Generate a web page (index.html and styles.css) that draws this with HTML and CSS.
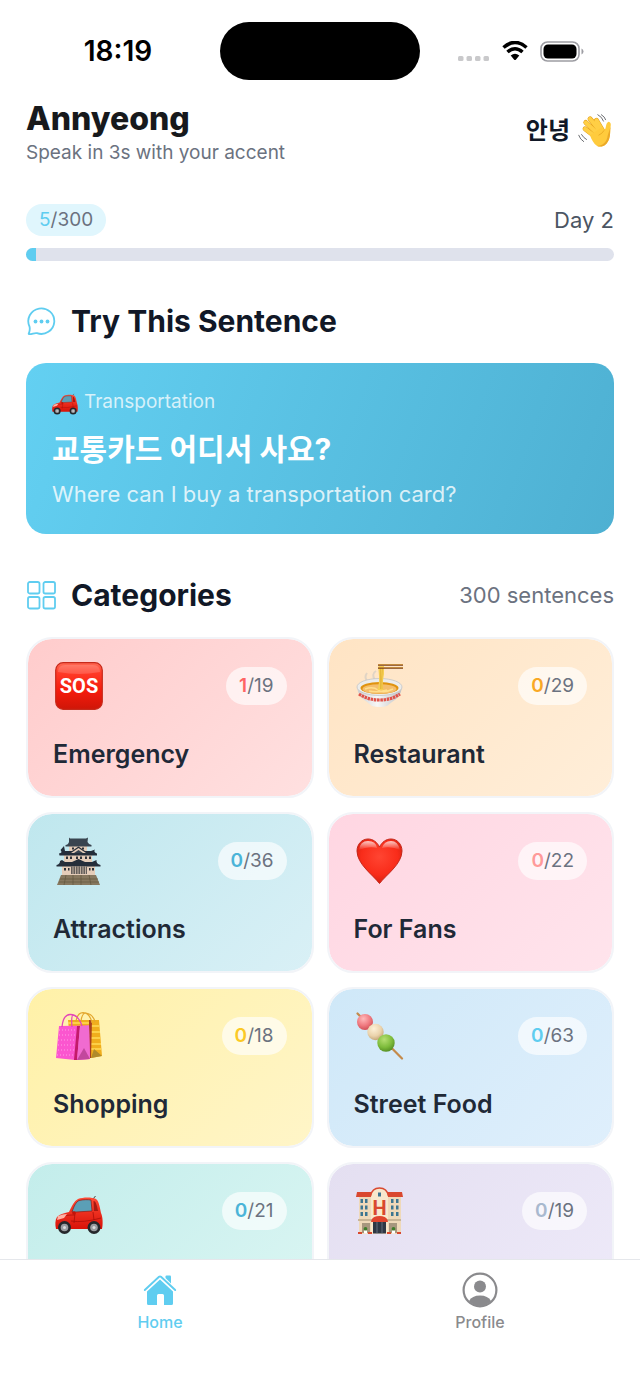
FILE: index.html
```
<!DOCTYPE html>
<html lang="en">
<head>
  <meta charset="UTF-8">
  <meta name="viewport" content="width=device-width, initial-scale=1.0">
  <title>Annyeong</title>
  <link rel="stylesheet" href="styles.css">
</head>
<body>
  <!-- car is used twice, so it lives here -->
  <svg class="defs" aria-hidden="true">
    <defs>
      <linearGradient id="carBody" x1="0" y1="0" x2="0" y2="1">
        <stop offset="0" stop-color="#ff4a35"/>
        <stop offset="1" stop-color="#d81208"/>
      </linearGradient>
      <symbol id="car" viewBox="0 0 48 48">
        <path d="M38 12 40.5 9" stroke="#444" stroke-width="1"/>
        <path d="M1 42C0 38 0 33 2 30 5 27 10 26 14 25 17 19 19 14 23 12 28 10 37 10 41 12 44 14 45 21 46 26 48 30 48 38 47 42Z" fill="url(#carBody)"/>
        <path d="M17 25C19 19 21 15 24 13.500 28 12.500 33 12.500 36 13L37 24 21 25Z" fill="#5b9fb6" stroke="#8c1a12" stroke-width=".7"/>
        <path d="M38.500 14C41 14 42 19 43 24L39 24Z" fill="#a51a12"/>
        <path d="M3 31C9 28 15 28 20 28M20 26 19 36M38 25 39 33M16 34Q28 36 46 31" fill="none" stroke="#a90f09" stroke-width=".8"/>
        <path d="M3 29Q8 27 12 27L9 31 2 33Z" fill="#ffb3a6"/>
        <circle cx="19" cy="26" r="1.800" fill="#c41208"/>
        <circle cx="9.500" cy="40.500" r="6.500" fill="#25272b"/>
        <circle cx="39" cy="40.500" r="6.500" fill="#25272b"/>
        <circle cx="9.500" cy="40.500" r="3.800" fill="#9a9ca0"/>
        <circle cx="39" cy="40.500" r="3.800" fill="#9a9ca0"/>
        <circle cx="9.500" cy="40.500" r="1.500" fill="#dcdddf"/>
        <circle cx="39" cy="40.500" r="1.500" fill="#dcdddf"/>
      </symbol>
    </defs>
  </svg>

  <div class="status">
    <span class="time">18:19</span>
    <span class="island"></span>
    <div class="signals">
      <svg width="32" height="20" viewBox="0 0 32 20" fill="#c9c9cb" aria-label="No signal">
        <rect x="0" y="15" width="5.500" height="5" rx="1.500"/>
        <rect x="8.500" y="15" width="5.500" height="5" rx="1.500"/>
        <rect x="17" y="15" width="5.500" height="5" rx="1.500"/>
        <rect x="25.500" y="15" width="5.500" height="5" rx="1.500"/>
      </svg>
      <svg width="26" height="20" viewBox="0 0 26 20" aria-label="Wi-Fi">
        <path d="M1.500 6.500Q13-3.500 24.500 6.500M5.500 11Q13 4.500 20.500 11" fill="none" stroke="#000" stroke-width="3.600"/>
        <path d="M8.700 14.500Q13 11 17.300 14.500L14 18.500Q13 19.500 12 18.500Z" fill="#000"/>
      </svg>
      <svg width="44" height="21" viewBox="0 0 44 21" aria-label="Battery full">
        <rect x="1" y="1" width="38" height="19" rx="6.500" fill="none" stroke="#9d9da3" stroke-width="1.600"/>
        <rect x="3.500" y="3.500" width="33" height="14" rx="4.500" fill="#000"/>
        <path d="M41.500 7.500Q43.500 8.500 43.500 10.500T41.500 13.500Z" fill="#9d9da3"/>
      </svg>
    </div>
  </div>

  <main>
    <header>
      <div>
        <h1>Annyeong</h1>
        <p class="tagline">Speak in 3s with your accent</p>
      </div>
      <div class="hello">
        <span lang="ko">안녕</span>
        <svg width="34" height="34" viewBox="0 0 48 48" aria-hidden="true">
          <g fill="none" stroke-linecap="round">
            <g stroke="#e3a01c" stroke-width="7">
              <path d="M27 34 10 21M29 29 11 12M32 25 17 7M35 24 26 9"/>
            </g>
            <g stroke="#ffcf45" stroke-width="5.600">
              <path d="M27 34 10 21M29 29 11 12M32 25 17 7M35 24 26 9"/>
            </g>
          </g>
          <path d="M17 30 33 19C36 21 37 23 38 22 40 19 39 13 43 11 46 11 47 14 46 18 45 24 46 29 44 35 41 44 34 48 27 45 22 42 19 36 17 30Z" fill="#ffcb3d"/>
          <path d="M46 18C45 24 46 29 44 35 41 44 34 48 27 45 34 45 41 40 42 30" fill="#eba928"/>
          <path d="M29 30Q34 28 37 23" fill="none" stroke="#e3a01c" stroke-width="1"/>
          <path d="M28 1Q34 4 36 10M33 1Q38 4 39 8M1 30Q3 36 8 39M5 29Q8 34 12 36" fill="none" stroke="#55575c" stroke-width="1.200" stroke-linecap="round"/>
        </svg>
      </div>
    </header>

    <section class="progress">
      <div class="row">
        <span class="count"><b>5</b>/300</span>
        <span class="day">Day 2</span>
      </div>
      <div class="track" role="progressbar" aria-label="Sentences learned" aria-valuemin="0" aria-valuemax="300" aria-valuenow="5">
        <div class="fill" style="width: 1.67%"></div>
      </div>
    </section>

    <section class="sentence">
      <div class="heading">
        <svg width="30" height="30" viewBox="0 0 30 30" fill="none" stroke="#5fcdf0" stroke-width="1.800" stroke-linejoin="round" aria-hidden="true">
          <path d="M3.500 20.500A13 12.800 0 1 1 11 27.200C8.500 26.500 6 28.500 3 28.200 2.200 28 3 27 3.300 26 4 23.500 4 22.500 3.500 20.500Z"/>
          <g fill="#5fcdf0" stroke="none">
            <circle cx="9.500" cy="15.500" r="1.900"/>
            <circle cx="15.500" cy="15.500" r="1.900"/>
            <circle cx="21.500" cy="15.500" r="1.900"/>
          </g>
        </svg>
        <h2>Try This Sentence</h2>
      </div>
      <a href="#transportation" class="card">
        <span class="topic"><svg width="26" height="26" aria-hidden="true"><use href="#car"/></svg>Transportation</span>
        <span class="korean" lang="ko">교통카드 어디서 사요?</span>
        <span class="english">Where can I buy a transportation card?</span>
      </a>
    </section>

    <section>
      <div class="heading">
        <svg width="30" height="30" viewBox="0 0 30 30" fill="none" stroke="#5fcdf0" stroke-width="1.800" aria-hidden="true">
          <rect x="2" y="2" width="11.500" height="11.500" rx="1.800"/>
          <rect x="17.500" y="2" width="11.500" height="11.500" rx="1.800"/>
          <rect x="2" y="17" width="11.500" height="11.500" rx="1.800"/>
          <rect x="17.500" y="17" width="11.500" height="11.500" rx="1.800"/>
        </svg>
        <h2>Categories</h2>
        <span class="total">300 sentences</span>
      </div>

      <div class="grid">
        <a href="#emergency" class="cat emergency">
          <span class="top">
            <svg class="emoji" viewBox="0 0 48 48" aria-hidden="true">
              <defs>
                <linearGradient id="sos" x1="0" y1="0" x2="0" y2="1">
                  <stop offset="0" stop-color="#ff6a55"/>
                  <stop offset=".22" stop-color="#ff3b28"/>
                  <stop offset=".6" stop-color="#f51b0c"/>
                  <stop offset="1" stop-color="#cf1608"/>
                </linearGradient>
              </defs>
              <rect x=".7" y=".7" width="46.600" height="46.600" rx="7.500" fill="url(#sos)" stroke="#c72a1b" stroke-width="1.200"/>
              <path d="M3 10Q3 3 10 3H38Q45 3 45 10Q24 14 3 10Z" fill="#fff" opacity=".16"/>
              <text x="24" y="31" class="sos">SOS</text>
            </svg>
            <span class="badge"><b>1</b>/19</span>
          </span>
          <span class="name">Emergency</span>
        </a>

        <a href="#restaurant" class="cat restaurant">
          <span class="top">
            <svg class="emoji" viewBox="0 0 48 48" aria-hidden="true">
              <defs>
                <linearGradient id="bowl" x1="0" y1="0" x2="1" y2="0">
                  <stop offset="0" stop-color="#cfd0d2"/>
                  <stop offset=".45" stop-color="#f7f7f6"/>
                  <stop offset="1" stop-color="#bfc0c2"/>
                </linearGradient>
              </defs>
              <path d="M11 19Q8 15 11 11M19 18Q15 12 20 9" fill="none" stroke="#e0d4c5" stroke-width="2"/>
              <path d="M1 25Q2 35 11 40L16 44Q24 46 31 44L36 40Q45 35 46 25Z" fill="url(#bowl)"/>
              <ellipse cx="23.500" cy="25" rx="22.500" ry="8.500" fill="#ececea" stroke="#c4c5c6" stroke-width=".8"/>
              <ellipse cx="23.500" cy="26" rx="19" ry="6" fill="#e0930f"/>
              <ellipse cx="23.500" cy="27" rx="17" ry="4.800" fill="#f4bd6b"/>
              <path d="M9 27Q17 24 22 28T37 27M13 29Q22 31 31 28" fill="none" stroke="#ffdf8c" stroke-width="1.400"/>
              <path d="M21.500 28Q24 20 22.500 8V4H28V12Q26 22 27.500 28Z" fill="#f6cf52"/>
              <path d="M24.500 5V27M26.500 5Q25 18 26 27" fill="none" stroke="#dca72c" stroke-width=".6"/>
              <path d="M3 32Q12 38 23.500 38T44 32" fill="none" stroke="#e0534a" stroke-width="3.200" stroke-dasharray="2.500 .7"/>
              <path d="M22 3H47M22 6H47" stroke="#7c3f16" stroke-width="1.400"/>
              <path d="M22 2.500H47M22 5.500H47" stroke="#d29a3c" stroke-width=".7"/>
            </svg>
            <span class="badge"><b>0</b>/29</span>
          </span>
          <span class="name">Restaurant</span>
        </a>

        <a href="#attractions" class="cat attractions">
          <span class="top">
            <svg class="emoji" viewBox="0 0 48 48" aria-hidden="true">
              <path d="M6 38H41L45 48H2Z" fill="#87785f"/>
              <path d="M5 42H43M4 45H44M11 38 9 48M18 38V48M26 38V48M34 38 36 48" stroke="#62563f" stroke-width=".7"/>
              <path d="M7 28H40V38H7Z" fill="#e5cdb9"/>
              <path d="M9 17H37V25H9Z" fill="#e5cdb9"/>
              <path d="M14 8H32V14H14Z" fill="#e5cdb9"/>
              <path d="M14 0.500 15 1.500H31L33 .5 32.500 5Q34 8 36.500 8V9.500H10.500V8Q13 8 14 5Z" fill="#39444f"/>
              <path d="M9 9 5.500 13Q8 16 4 16.500L4.500 18.500H42V16.500Q38 15 40 12.500L36 14H30L23.500 9.500 17 14H10Z" fill="#252e3a"/>
              <path d="M16 16 23.500 11 31 16Z" fill="#e5cdb9"/>
              <path d="M19 16 23.500 13 28 16Z" fill="#39444f"/>
              <path d="M7 23 5 24Q5 27 1.500 28V29.500H45.500V28Q41 27 41.500 23L37 25H30L23.500 22 17 25H10Z" fill="#252e3a"/>
              <path d="M17 10.500H19V12.500H17ZM27 10.500H29V12.500H27ZM11 19.500H13V22H11ZM15 19.500H17V22H15ZM21 19.500H23V22H21ZM25 19.500H27V22H25ZM30 19.500H32V22H30ZM34 19.500H36V22H34ZM9 31H11V33.500H9ZM13 31H14.500V33.500H13ZM34 31H35.500V33.500H34ZM37 31H39V33.500H37Z" fill="#2c3139"/>
              <path d="M16 29.500H32V37H16Z" fill="#65605c"/>
              <path d="M18 29.500V37M20.500 29.500V37M23 29.500V37M25.500 29.500V37M28 29.500V37M30.500 29.500V37" stroke="#cbb8a7" stroke-width=".9"/>
            </svg>
            <span class="badge"><b>0</b>/36</span>
          </span>
          <span class="name">Attractions</span>
        </a>

        <a href="#fans" class="cat fans">
          <span class="top">
            <svg class="emoji" viewBox="0 0 48 48" aria-hidden="true">
              <defs>
                <radialGradient id="heart" cx=".5" cy=".4" r=".62">
                  <stop offset="0" stop-color="#ff4532"/>
                  <stop offset=".65" stop-color="#f92c1a"/>
                  <stop offset="1" stop-color="#d1200f"/>
                </radialGradient>
                <linearGradient id="shine" x1="0" y1="0" x2="0" y2="1">
                  <stop offset="0" stop-color="#fff" stop-opacity=".75"/>
                  <stop offset="1" stop-color="#fff" stop-opacity="0"/>
                </linearGradient>
              </defs>
              <path d="M23.500 46.500C17 38 1 27 1 14 1 7 6 2 12 2 17 2 21 5 23.500 10 26 5 30 2 35 2 41 2 46 7 46 14 46 27 30 38 23.500 46.500Z" fill="url(#heart)" stroke="#c4281b" stroke-width="1"/>
              <path d="M3 13Q4 4 12 4T21 11Q12 9 3 13ZM26 11Q28 4 35 4T44 13Q35 9 26 11Z" fill="url(#shine)"/>
            </svg>
            <span class="badge"><b>0</b>/22</span>
          </span>
          <span class="name">For Fans</span>
        </a>

        <a href="#shopping" class="cat shopping">
          <span class="top">
            <svg class="emoji" viewBox="0 0 48 48" aria-hidden="true">
              <path d="M13 8H44L47 44 36 46 16 40Z" fill="#f0ae1d"/>
              <path d="M13 11H35M36 14H44M36 20H45M36 26H45M36 32H46M36 37H46" stroke="#ffdc55" stroke-width="1.400"/>
              <path d="M34 8H37L36 46H34Z" fill="#a8411f"/>
              <path d="M36 46 39 37 47 44Z" fill="#b08a2a"/>
              <path d="M21 10Q22 1 28 0.700 35 1 37 11M26 9Q27 1 31 1 38 2 40 10" fill="none" stroke="#e3a62e" stroke-width="1.200"/>
              <path d="M4 14 34 13.500 35 47 20 48 1 46Z" fill="#fb56cf"/>
              <path d="M22 14 25 14 22 48 19 48Z" fill="#c31b6a"/>
              <path d="M25 14 34 13.500 35 47 22 48Z" fill="#f06bd0"/>
              <path d="M22 48 29 36 35 47Z" fill="#c2479d"/>
              <path d="M4 18H20M4 23H20M3 28H19M3 33H19M3 38H19M2 43H19" stroke="#ff9ee5" stroke-width="1" stroke-dasharray="1 2"/>
              <path d="M7 15Q8 3 15 2.500 23 2 27 14M17 15Q16 4 18 3" fill="none" stroke="#e447b8" stroke-width="1.300"/>
            </svg>
            <span class="badge"><b>0</b>/18</span>
          </span>
          <span class="name">Shopping</span>
        </a>

        <a href="#street-food" class="cat street">
          <span class="top">
            <svg class="emoji" viewBox="0 0 48 48" aria-hidden="true">
              <defs>
                <radialGradient id="pinkBall" cx=".4" cy=".3" r=".75">
                  <stop offset="0" stop-color="#ffb9ba"/>
                  <stop offset=".55" stop-color="#f07c82"/>
                  <stop offset="1" stop-color="#cf4a52"/>
                </radialGradient>
                <radialGradient id="creamBall" cx=".4" cy=".3" r=".75">
                  <stop offset="0" stop-color="#fdf1d8"/>
                  <stop offset=".6" stop-color="#ead2ab"/>
                  <stop offset="1" stop-color="#c0a071"/>
                </radialGradient>
                <radialGradient id="greenBall" cx=".4" cy=".3" r=".75">
                  <stop offset="0" stop-color="#b5df72"/>
                  <stop offset=".6" stop-color="#7dbb3b"/>
                  <stop offset="1" stop-color="#518a21"/>
                </radialGradient>
              </defs>
              <path d="M1.500 1.500 46 46.500" stroke="#c48a4b" stroke-width="2.200" stroke-linecap="round"/>
              <circle cx="9" cy="10" r="8" fill="url(#pinkBall)"/>
              <circle cx="19.500" cy="20" r="8.200" fill="url(#creamBall)"/>
              <circle cx="30" cy="31" r="8.700" fill="url(#greenBall)"/>
            </svg>
            <span class="badge"><b>0</b>/63</span>
          </span>
          <span class="name">Street Food</span>
        </a>

        <a href="#transportation" class="cat transport">
          <span class="top">
            <svg class="emoji" aria-hidden="true"><use href="#car"/></svg>
            <span class="badge"><b>0</b>/21</span>
          </span>
        </a>

        <a href="#hotel" class="cat hotel">
          <span class="top">
            <svg class="emoji" viewBox="0 0 48 48" aria-hidden="true">
              <path d="M3 10H45V47H3Z" fill="#efd9b9"/>
              <path d="M1 5H16V10H0ZM31 5H46L47 10H31Z" fill="#d9482f"/>
              <path d="M15 47V8Q16 1 23.500 1T32 8V47Z" fill="#f8e8cc"/>
              <path d="M14.500 9Q16 1 23.500 1T32.500 9" fill="none" stroke="#d9482f" stroke-width="1.600"/>
              <path d="M4.500 12H7V16H4.500ZM9 12H11.500V16H9ZM35 12H37.500V16H35ZM40 12H42.500V16H40ZM4.500 18.500H7V22.500H4.500ZM9 18.500H11.500V22.500H9ZM35 18.500H37.500V22.500H35ZM40 18.500H42.500V22.500H40ZM4.500 25H7V29H4.500ZM9 25H11.500V29H9ZM35 25H37.500V29H35ZM40 25H42.500V29H40ZM22 5.500H25V9.500H22Z" fill="#3d7691"/>
              <text x="23.500" y="28" class="hotel-h">H</text>
              <path d="M2 32H45V34H2Z" fill="#c9b596"/>
              <path d="M6 36H14V46H6ZM33 36H41V46H33Z" fill="#a7977e"/>
              <path d="M15.500 33Q17 29 23.500 29T31.500 33L32 35H15Z" fill="#e0452d"/>
              <path d="M17 35H30V46.500H17Z" fill="#2f3744"/>
              <path d="M21 35V46.500M26 35V46.500" stroke="#7d8796" stroke-width=".7"/>
              <circle cx="9.500" cy="42" r="1.900" fill="#3f7d2b"/>
              <circle cx="37.500" cy="42" r="1.900" fill="#3f7d2b"/>
              <path d="M8 43.500H11V46.500H8ZM36 43.500H39V46.500H36Z" fill="#fff"/>
              <path d="M2 45H6V47H2ZM12 45H16V47H12ZM31 45H35V47H31ZM41 45H45V47H41Z" fill="#d9482f"/>
            </svg>
            <span class="badge"><b>0</b>/19</span>
          </span>
        </a>
      </div>
    </section>
  </main>

  <nav>
    <a href="#home" class="active">
      <svg width="36" height="36" viewBox="0 0 36 36" fill="#5fcdf0" aria-hidden="true">
        <path d="M18 7.500 31 19.500V31.500Q31 33 29.500 33H22V23.500Q22 22 20.500 22H16.500Q15 22 15 23.500V33H6.500Q5 33 5 31.500V19.500Z"/>
        <path d="M2.800 18 17 4.800Q18 4 19 4.800L33.200 18" fill="none" stroke="#5fcdf0" stroke-width="1.900" stroke-linecap="round"/>
        <path d="M23.500 6V4.500Q23.500 3.500 24.500 3.500H28Q29 3.500 29 4.500V11.500Z"/>
      </svg>
      Home
    </a>
    <a href="#profile">
      <svg width="36" height="36" viewBox="0 0 36 36" fill="#8a8a8d" aria-hidden="true">
        <circle cx="18" cy="18" r="16.400" fill="none" stroke="#8a8a8d" stroke-width="2.200"/>
        <circle cx="18" cy="14.500" r="6"/>
        <path d="M7 29Q10 23.500 18 23.500T29 29Q24.500 34 18 34T7 29Z"/>
      </svg>
      Profile
    </a>
  </nav>
</body>
</html>
```
FILE: styles.css
```
* {
  padding: 0;
  margin: 0;
  box-sizing: border-box;
}
body {
  height: 100vh;
  display: flex;
  flex-direction: column;
  background-color: #fff;
  color: #111827;
  font-family: Inter, "Noto Sans CJK KR", sans-serif;
}
a {
  color: inherit;
  text-decoration: none;
}
svg {
  display: block;
  flex-shrink: 0;
}
.defs {
  position: absolute;
  width: 0;
  height: 0;
}

/* status bar */
.status {
  display: grid;
  grid-template-columns: 1fr 200px 1fr;
  align-items: center;
  padding: 22px 0 20px;
}
.time {
  padding-left: 16px;
  text-align: center;
  font-size: 28px;
  font-weight: 600;
  color: #000;
}
.island {
  height: 58px;
  border-radius: 29px;
  background-color: #000;
}
.signals {
  display: flex;
  justify-content: center;
  gap: 12px;
  padding-right: 18px;
}

main {
  flex: 1;
  min-height: 0;
  overflow-y: auto;
  scrollbar-width: none;
  padding: 0 26px 26px;
}
header {
  display: flex;
  justify-content: space-between;
  align-items: center;
  margin-bottom: 36px;
}
h1 {
  font-size: 32px;
  line-height: 38px;
  font-weight: 800;
  color: #17191c;
}
.tagline {
  font-size: 19px;
  line-height: 30px;
  color: #6b7280;
}
.hello {
  display: flex;
  align-items: center;
  gap: 8px;
  padding: 0 2px 6px 0;
  font-size: 24px;
  line-height: 32px;
  font-weight: 600;
}

/* progress */
.progress {
  margin-bottom: 40px;
}
.row {
  display: flex;
  justify-content: space-between;
  align-items: center;
  margin-bottom: 12px;
}
.count {
  padding: 0 13px;
  border-radius: 16px;
  background-color: #e0f6fd;
  font-size: 19px;
  line-height: 32px;
  color: #6b7280;
}
.count b {
  font-weight: 400;
  color: #5fcdf0;
}
.day {
  font-size: 22px;
  line-height: 32px;
  color: #4b5563;
}
.track {
  height: 13px;
  border-radius: 7px;
  background-color: #dfe2ec;
  overflow: hidden;
}
.fill {
  height: 100%;
  background-color: #5fcdf0;
}

/* sentence card */
.sentence {
  margin-bottom: 41px;
}
.heading {
  display: flex;
  align-items: center;
  gap: 15px;
  margin-bottom: 22px;
}
h2 {
  font-size: 30px;
  line-height: 40px;
  font-weight: 700;
}
.total {
  margin-left: auto;
  font-size: 22px;
  color: #6b7280;
}
.card {
  display: flex;
  flex-direction: column;
  padding: 26px;
  border-radius: 20px;
  background: linear-gradient(110deg, #63d0f2, #4eb0d2);
  color: #fff;
}
.topic {
  display: flex;
  align-items: center;
  gap: 6px;
  font-size: 19px;
  line-height: 26px;
  color: rgba(255, 255, 255, 0.75);
}
.korean {
  margin: 13px 0 10px;
  font-size: 30px;
  line-height: 42px;
  font-weight: 700;
}
.english {
  font-size: 22px;
  line-height: 28px;
  color: rgba(255, 255, 255, 0.8);
}

/* categories */
.grid {
  display: grid;
  grid-template-columns: 1fr 1fr;
  gap: 14px 13px;
}
.cat {
  --count: #4bb4d8;
  min-height: 161px;
  padding: 23px 25px 26px;
  border: 2px solid #f2f4f8;
  border-radius: 26px;
  background-clip: padding-box;
}
.top {
  display: flex;
  justify-content: space-between;
  align-items: center;
  margin-bottom: 28px;
}
.emoji {
  width: 48px;
  height: 48px;
  margin-left: 2px;
}
.badge {
  padding: 0 13px;
  border-radius: 19px;
  background-color: rgba(255, 255, 255, 0.65);
  font-size: 19px;
  line-height: 38px;
  color: #6b7280;
}
.badge b {
  font-weight: 600;
  color: var(--count);
}
.name {
  display: block;
  font-size: 25px;
  line-height: 32px;
  font-weight: 600;
  color: #1f2937;
}
.emergency {
  --count: #ff6464;
  background-image: linear-gradient(135deg, #ffcccc, #ffe0e0);
}
.restaurant {
  --count: #f9a825;
  background-image: linear-gradient(135deg, #ffe4c4, #ffeed9);
}
.attractions {
  background-image: linear-gradient(135deg, #bfe7ee, #d9f0f6);
}
.fans {
  --count: #ff9a9a;
  background-image: linear-gradient(135deg, #ffd6e2, #ffe4ec);
}
.shopping {
  --count: #fbc926;
  background-image: linear-gradient(135deg, #fff1a8, #fff5c8);
}
.street {
  --count: #5fcdf0;
  background-image: linear-gradient(135deg, #cfe8f8, #dfeffc);
}
.transport {
  background-image: linear-gradient(135deg, #c3edeb, #dbf6f3);
}
.hotel {
  --count: #a9b9cf;
  background-image: linear-gradient(135deg, #e4dff1, #eeeaf9);
}
.sos {
  font: 700 20px Roboto, sans-serif;
  text-anchor: middle;
  fill: #fff;
}
.hotel-h {
  font: 700 20px Roboto, sans-serif;
  text-anchor: middle;
  fill: #d9482f;
}

/* tab bar */
nav {
  display: grid;
  grid-template-columns: 1fr 1fr;
  padding: 12px 0 59px;
  border-top: 1px solid #e5e7eb;
  background-color: #fff;
}
nav a {
  display: flex;
  flex-direction: column;
  align-items: center;
  gap: 4px;
  font-size: 16px;
  line-height: 20px;
  font-weight: 500;
  color: #8a8a8d;
}
nav .active {
  color: #5fcdf0;
}
```
